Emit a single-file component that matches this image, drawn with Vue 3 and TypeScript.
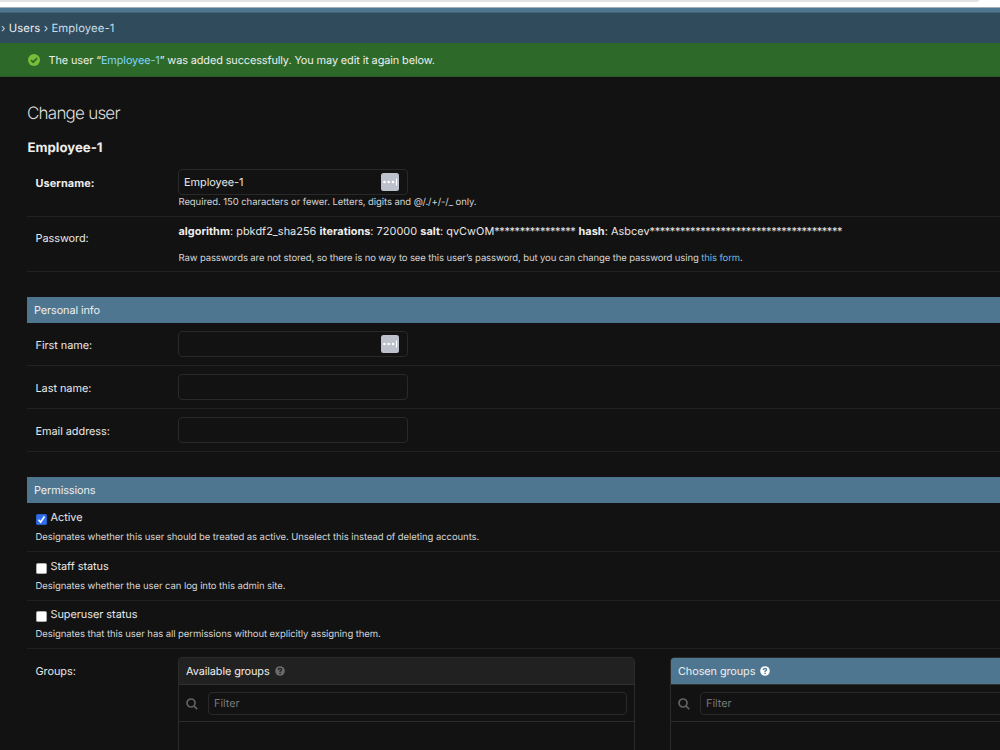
<script setup lang="ts">
interface TextField { label: string; manager: boolean }
interface Flag { label: string; help: string; checked: boolean; cls: string }

const fields: TextField[] = [
  { label: 'First name:', manager: true },
  { label: 'Last name:', manager: false },
  { label: 'Email address:', manager: false },
]
const flags: Flag[] = [
  { label: 'Active', help: 'Designates whether this user should be treated as active. Unselect this instead of deleting accounts.', checked: true, cls: 'f1' },
  { label: 'Staff status', help: 'Designates whether the user can log into this admin site.', checked: false, cls: 'f2' },
  { label: 'Superuser status', help: 'Designates that this user has all permissions without explicitly assigning them.', checked: false, cls: 'f3' },
]
const groups = [
  { title: 'Available groups', cls: 'available' },
  { title: 'Chosen groups', cls: 'chosen' },
]
const saltMask = '*'.repeat(16)
const hashMask = '*'.repeat(38)
</script>

<template>
  <div class="page">
    <div class="chrome"><div class="tabbar"></div></div>
    <div class="strip"></div>
    <nav class="crumbs">› <span class="crumb-link">Users</span> › Employee-1</nav>
    <div class="message">
      <svg class="tick" viewBox="0 0 12 12"><circle cx="6" cy="6" r="6" fill="#78be38" /><path d="M3 6.1 5.2 8.2 9.1 4.1" fill="none" stroke="#2c6a29" stroke-width="1.7" /></svg>
      <span>The user “<a>Employee-1</a>” was added successfully. You may edit it again below.</span>
    </div>
    <main>
      <h1>Change user</h1>
      <h2>Employee-1</h2>

      <section>
        <div class="row username">
          <label class="label bold">Username:</label>
          <div class="value">
            <div class="input"><span>Employee-1</span>
              <svg class="manager" viewBox="0 0 18 18"><rect width="18" height="18" rx="2.5" fill="#bdc1cc" /><g fill="#fff"><circle cx="3.4" cy="9" r="1.35" /><circle cx="7.7" cy="9" r="1.35" /><circle cx="12" cy="9" r="1.35" /><rect x="15" y="5.5" width="1" height="7" /></g></svg>
            </div>
            <div class="help">Required. 150 characters or fewer. Letters, digits and @/./+/-/_ only.</div>
          </div>
        </div>
        <div class="row password">
          <label class="label">Password:</label>
          <div class="value">
            <div class="digest"><b>algorithm</b>: pbkdf2_sha256 <b>iterations</b>: 720000 <b>salt</b>: qvCwOM<span class="mask">{{ saltMask }}</span> <b>hash</b>: Asbcev<span class="mask">{{ hashMask }}</span></div>
            <div class="help raw">Raw passwords are not stored, so there is no way to see this user’s password, but you can change the password using <a>this form</a>.</div>
          </div>
        </div>
      </section>

      <section class="module">
        <h3>Personal info</h3>
        <div v-for="f in fields" :key="f.label" class="row text">
          <label class="label">{{ f.label }}</label>
          <div class="input">
            <svg v-if="f.manager" class="manager" viewBox="0 0 18 18"><rect width="18" height="18" rx="2.5" fill="#bdc1cc" /><g fill="#fff"><circle cx="3.4" cy="9" r="1.35" /><circle cx="7.7" cy="9" r="1.35" /><circle cx="12" cy="9" r="1.35" /><rect x="15" y="5.5" width="1" height="7" /></g></svg>
          </div>
        </div>
      </section>

      <section class="module">
        <h3>Permissions</h3>
        <div v-for="f in flags" :key="f.label" class="flag" :class="f.cls">
          <div class="flag-line">
            <svg class="box" viewBox="0 0 11 11">
              <rect x=".25" y=".25" width="10.5" height="10.5" rx="1.6" :fill="f.checked ? '#2f6fed' : '#fff'" :stroke="f.checked ? '#2f6fed' : '#8a8a8a'" stroke-width=".5" />
              <path v-if="f.checked" d="M2.5 5.8 4.6 8.1 8.5 2.5" fill="none" stroke="#fff" stroke-width="1.6" />
            </svg>
            <span class="flag-name">{{ f.label }}</span>
          </div>
          <div class="help">{{ f.help }}</div>
        </div>
        <div class="groups">
          <label class="label">Groups:</label>
          <div v-for="g in groups" :key="g.title" class="selector" :class="g.cls">
            <div class="sel-head">
              <span>{{ g.title }}</span>
              <svg class="q" viewBox="0 0 10 10"><circle class="disc" cx="5" cy="5" r="4.8" /><path class="mark" d="M3.4 4V3.6Q3.6 2.4 5 2.4 6.6 2.5 6.6 3.8 6.5 4.7 5.1 5.1V6" /><rect class="dot" x="4.4" y="6.7" width="1.4" height="1.4" /></svg>
            </div>
            <div class="filter">
              <svg class="search" viewBox="0 0 12 12"><circle cx="5" cy="5" r="4" /><path d="M8 8 11.2 11.2" /></svg>
              <div class="filter-input">Filter</div>
            </div>
          </div>
        </div>
      </section>
    </main>
  </div>
</template>

<style>
html, body { margin: 0; background: #121212; overflow: hidden; }
</style>

<style scoped>
* { box-sizing: border-box; }
.page { width: 1000px; height: 750px; overflow: hidden; background: #121212; color: #e8e8e8; font: 10.9px/14px Inter, "Liberation Sans", sans-serif; letter-spacing: -0.04px; white-space: nowrap; text-rendering: geometricPrecision; }
.chrome { height: 8px; background: #fff; border-bottom: 1px solid #a3b0b9; }
.tabbar { width: 979px; height: 2px; background: #e2e2e2; border-bottom-right-radius: 4px; }
.strip { height: 5px; background: #4f7690; border-bottom: 1px solid #43657b; }
.crumbs { height: 30px; line-height: 31px; padding-left: 1px; background: #2f4b5c; color: #c9dfe9; font-size: 11.3px; letter-spacing: 0.1px; }
.crumb-link { color: #eee; }
.message { height: 34px; display: flex; align-items: center; background: #2d6a29; border-bottom: 1px solid #2c5927; padding-left: 28px; color: #eee; letter-spacing: -0.1px; }
.message span { padding-top: 1px; }
.tick { width: 12px; height: 12px; margin-right: 8.5px; }
a { color: #81d4fa; }
main { padding-left: 27px; }
h1 { margin: 26px 0 0; height: 22px; font-size: 17px; line-height: 22px; font-weight: 300; letter-spacing: -0.78px; color: #ddd; }
h2 { margin: 13px 0 0; height: 19px; font-size: 13.2px; line-height: 20px; font-weight: 700; letter-spacing: 0; color: #eee; padding-left: 0.5px; }
.row { display: flex; border-bottom: 1px solid #222; padding-left: 8.5px; }
.label { flex: 0 0 142.5px; }
.bold, b { font-weight: 700; color: #eee; }
.bold { letter-spacing: 0.08px; }
.username { height: 60px; padding-top: 12px; }
.username .label { padding-top: 7px; }
.input { position: relative; width: 230px; height: 26px; border: 1px solid #292929; border-radius: 4px; padding-left: 5px; line-height: 25px; }
.manager { position: absolute; right: 8px; top: 3px; width: 18px; height: 18px; }
.help { font-size: 9.5px; line-height: 12px; letter-spacing: -0.07px; color: #d5d5d5; }
.username .help { margin-top: 2px; padding-left: 0.5px; }
.password { height: 55px; }
.password .label { padding-top: 14px; }
.digest { margin-top: 7px; padding-left: 0.5px; letter-spacing: 0.04px; }
.mask { letter-spacing: -0.39px; }
.raw { margin-top: 15px; padding-left: 0.5px; letter-spacing: -0.105px; }
.raw a { color: #74b8dc; }
.module { margin-top: 25px; }
h3 { margin: 0; height: 26px; line-height: 27px; padding-left: 7px; font-size: 10.9px; font-weight: 400; letter-spacing: -0.1px; background: #4f7690; color: #eee; }
.text { height: 43px; padding-top: 8px; }
.text .label { padding-top: 7px; }
.flag { height: 49px; padding: 7px 0 0 8.5px; border-bottom: 1px solid #1f1f1f; }
.f3 { height: 48px; padding-top: 6px; }
.flag-line { display: flex; height: 14px; }
.box { width: 11px; height: 11px; margin: 4px 4px 0 0; }
.flag .help { margin-top: 8px; }
.groups { display: flex; padding: 8px 0 0 8.5px; }
.groups .label { padding-top: 7px; }
.selector { width: 457px; height: 130px; flex: none; border: 1px solid #2b2b2b; border-radius: 4px 4px 0 0; overflow: hidden; }
.chosen { margin-left: 35px; }
.sel-head { height: 27px; display: flex; align-items: center; padding-left: 7px; letter-spacing: -0.09px; background: #212121; border-bottom: 1px solid #303030; color: #eee; }
.chosen .sel-head { background: #4f7690; }
.q { width: 10px; height: 10px; margin-left: 5px; }
.disc { fill: #6b6b6b; }
.mark { fill: none; stroke: #212121; stroke-width: 1.3; }
.dot { fill: #212121; }
.chosen .disc { fill: #fff; }
.chosen .mark { stroke: #4f7690; }
.chosen .dot { fill: #4f7690; }
.filter { height: 37px; display: flex; align-items: flex-start; padding: 7px 7px 0 7px; border-bottom: 1px solid #2c2c2c; }
.search { width: 12px; height: 12px; margin: 6px 10px 0 0; fill: none; stroke: #626262; stroke-width: 1.7; }
.filter-input { flex: 1; height: 23px; border: 1px solid #292929; border-radius: 4px; padding-left: 5px; line-height: 21px; color: #777; }
</style>
